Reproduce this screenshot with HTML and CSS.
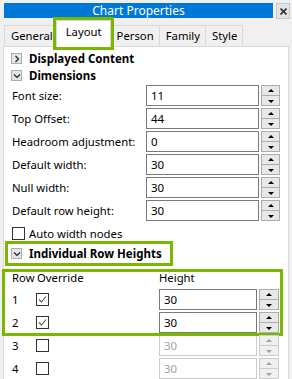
FILE: index.html
```html
<!DOCTYPE html>
<html lang="en">
<head>
    <meta charset="UTF-8">
    <title>Chart Properties</title>
    <link rel="stylesheet" href="styles.css">
</head>
<body>
    <div class="titlebar">
        <div class="title">Chart Properties</div>
        <button class="close">
            <svg width="7" height="7" viewBox="0 0 7 7"><path d="M0.5 0.5L6.5 6.5M6.5 0.5L0.5 6.5" stroke="#333" stroke-width="1.6"/></svg>
        </button>
    </div>

    <div class="tabs">
        <div class="tab">General</div>
        <div class="tab active marked">Layout</div>
        <div class="tab">Person</div>
        <div class="tab">Family</div>
        <div class="tab">Style</div>
    </div>

    <div class="panel">
        <div class="section">
            <span class="expander"><svg width="6" height="8" viewBox="0 0 6 8"><path d="M1.5 1L4.5 4L1.5 7" fill="none" stroke="#222" stroke-width="1.2"/></svg></span>
            Displayed Content
        </div>
        <div class="section">
            <span class="expander"><svg width="8" height="6" viewBox="0 0 8 6"><path d="M1 1.5L4 4.5L7 1.5" fill="none" stroke="#222" stroke-width="1.2"/></svg></span>
            Dimensions
        </div>

        <div class="form">
            <div class="field">
                <label>Font size:</label>
                <div class="spin"><input value="11"><div class="spin-btns"><span class="up"></span><span class="down"></span></div></div>
            </div>
            <div class="field">
                <label>Top Offset:</label>
                <div class="spin"><input value="44"><div class="spin-btns"><span class="up"></span><span class="down"></span></div></div>
            </div>
            <div class="field">
                <label>Headroom adjustment:</label>
                <div class="spin"><input value="0"><div class="spin-btns"><span class="up"></span><span class="down"></span></div></div>
            </div>
            <div class="field">
                <label>Default width:</label>
                <div class="spin"><input value="30"><div class="spin-btns"><span class="up"></span><span class="down"></span></div></div>
            </div>
            <div class="field">
                <label>Null width:</label>
                <div class="spin"><input value="30"><div class="spin-btns"><span class="up"></span><span class="down"></span></div></div>
            </div>
            <div class="field">
                <label>Default row height:</label>
                <div class="spin"><input value="30"><div class="spin-btns"><span class="up"></span><span class="down"></span></div></div>
            </div>
        </div>

        <div class="check-row">
            <span class="checkbox"></span>
            Auto width nodes
        </div>

        <div class="section marked wide">
            <span class="expander"><svg width="8" height="6" viewBox="0 0 8 6"><path d="M1 1.5L4 4.5L7 1.5" fill="none" stroke="#222" stroke-width="1.2"/></svg></span>
            Individual Row Heights
        </div>

        <div class="row-group marked">
            <div class="row-head">
                <span>Row</span>
                <span>Override</span>
                <span>Height</span>
            </div>
            <div class="row">
                <span>1</span>
                <span class="checkbox checked"><svg width="11" height="11" viewBox="0 0 11 11"><path d="M2 5.5L4.5 8L9 2.5" fill="none" stroke="#555" stroke-width="1.1"/></svg></span>
                <div class="spin small"><input value="30"><div class="spin-btns"><span class="up"></span><span class="down"></span></div></div>
            </div>
            <div class="row">
                <span>2</span>
                <span class="checkbox checked"><svg width="11" height="11" viewBox="0 0 11 11"><path d="M2 5.5L4.5 8L9 2.5" fill="none" stroke="#555" stroke-width="1.1"/></svg></span>
                <div class="spin small"><input value="30"><div class="spin-btns"><span class="up"></span><span class="down"></span></div></div>
            </div>
        </div>

        <div class="row-group">
            <div class="row">
                <span>3</span>
                <span class="checkbox"></span>
                <div class="spin small disabled"><input value="30" disabled><div class="spin-btns"><span class="up"></span><span class="down"></span></div></div>
            </div>
            <div class="row">
                <span>4</span>
                <span class="checkbox"></span>
                <div class="spin small disabled"><input value="30" disabled><div class="spin-btns"><span class="up"></span><span class="down"></span></div></div>
            </div>
        </div>
    </div>
</body>
</html>
```

FILE: styles.css
```css
html, body {
    height: 100%;
}
body {
    margin: 0;
    background: #f0f0f0;
    font-family: "Noto Sans", "Open Sans", sans-serif;
    font-size: 11.3px;
    color: #000;
    overflow: hidden;
    display: flex;
    flex-direction: column;
}
.titlebar {
    display: flex;
    align-items: flex-start;
    padding: 3px 0 0 4px;
}
.title {
    width: 269px;
    height: 15px;
    line-height: 15px;
    background: #0078d7;
    color: #fff;
    text-align: center;
    font-size: 12px;
}
.close {
    margin-left: 3px;
    width: 14px;
    height: 16px;
    padding: 0;
    border: 1px solid #c8c8c8;
    background: #e3e3e3;
    display: flex;
    align-items: center;
    justify-content: center;
}
.tabs {
    display: flex;
    align-items: flex-end;
    height: 25px;
    margin: 2px 0 0 4px;
    position: relative;
    z-index: 1;
}
.tab {
    height: 20px;
    line-height: 20px;
    padding: 0 5px 0 6px;
    border: 1px solid #d9d9d9;
    border-bottom: none;
    margin-right: -1px;
    background: #f0f0f0;
}
.tab.active {
    height: 26px;
    line-height: 22px;
    padding: 0 8px 0 9px;
    margin: 0 -1px -1px -2px;
    background: #fff;
    position: relative;
}
.marked {
    outline: 3px solid #78b800;
    outline-offset: 0;
}
.panel {
    flex: 1;
    margin: 0 3px;
    background: #fff;
    border: 1px solid #d9d9d9;
    border-bottom: none;
    padding-top: 3px;
}
.section {
    display: flex;
    align-items: center;
    gap: 7px;
    height: 17px;
    margin-left: 4px;
    padding-left: 3px;
    font-weight: bold;
    font-size: 11.5px;
}
.section.wide {
    width: 159px;
    height: 19px;
    margin-top: 3px;
}
.expander {
    width: 9px;
    height: 9px;
    border: 1px solid #adadad;
    background: #e5e5e5;
    display: flex;
    align-items: center;
    justify-content: center;
}
.form {
    display: flex;
    flex-direction: column;
    gap: 2px;
    margin-top: 1px;
    padding-left: 8px;
}
.field {
    display: flex;
    align-items: center;
    height: 21px;
}
.field label {
    width: 134px;
}
.spin {
    display: flex;
    align-items: stretch;
    height: 21px;
}
.spin input {
    width: 113px;
    box-sizing: border-box;
    margin: 0;
    padding: 0 4px;
    border: 1px solid #7a7a7a;
    font: inherit;
    font-size: 11.5px;
    color: #000;
    background: #fff;
    outline: none;
}
.spin.small input {
    width: 98px;
}
.spin-btns {
    display: flex;
    flex-direction: column;
    margin-left: 2px;
    width: 19px;
}
.spin.small .spin-btns {
    width: 20px;
}
.spin-btns span {
    flex: 1;
    border: 1px solid #adadad;
    background: #e8e8e8;
    position: relative;
}
.spin-btns span + span {
    border-top: none;
}
.spin-btns span::after {
    content: "";
    position: absolute;
    left: 50%;
    top: 50%;
    margin-left: -3px;
    margin-top: -2px;
    border-left: 3px solid transparent;
    border-right: 3px solid transparent;
}
.spin-btns .up::after {
    border-bottom: 3px solid #000;
}
.spin-btns .down::after {
    border-top: 3px solid #000;
    margin-top: -1px;
}
.spin.disabled input {
    border-color: #cccccc;
    color: #a3a3a3;
}
.spin.disabled .spin-btns span {
    border-color: #cccccc;
    background: #f0f0f0;
}
.spin.disabled .spin-btns .up::after {
    border-bottom-color: #a0a0a0;
}
.spin.disabled .spin-btns .down::after {
    border-top-color: #a0a0a0;
}
.check-row {
    display: flex;
    align-items: center;
    gap: 4px;
    height: 16px;
    margin-top: 4px;
    padding-left: 8px;
}
.checkbox {
    width: 11px;
    height: 11px;
    border: 1px solid #333;
    background: #fff;
    display: flex;
    align-items: center;
    justify-content: center;
}
.row-group {
    margin-left: 1px;
    width: 275px;
    display: flex;
    flex-direction: column;
    gap: 2px;
    padding-left: 7px;
    box-sizing: border-box;
}
.row-group.marked {
    margin-top: 9px;
}
.row-group + .row-group {
    margin-top: 2px;
}
.row-head {
    display: grid;
    grid-template-columns: 25px 122px auto;
    height: 15px;
    line-height: 12px;
}
.row {
    display: grid;
    grid-template-columns: 24px 123px auto;
    align-items: center;
    height: 21px;
}
```
